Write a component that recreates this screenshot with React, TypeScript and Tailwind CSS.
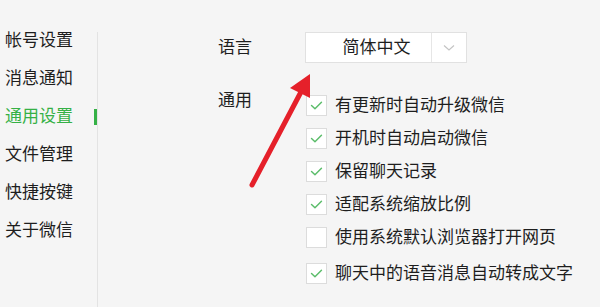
import React from 'react';

const menu = ['帐号设置', '消息通知', '通用设置', '文件管理', '快捷按键', '关于微信'];

const options = [
  { label: '有更新时自动升级微信', checked: true },
  { label: '开机时自动启动微信', checked: true },
  { label: '保留聊天记录', checked: true },
  { label: '适配系统缩放比例', checked: true },
  { label: '使用系统默认浏览器打开网页', checked: false },
  { label: '聊天中的语音消息自动转成文字', checked: true, gap: true },
];

const Check = () => (
  <svg width="21" height="21" viewBox="0 0 21 21" fill="none">
    <path d="M5 10.5l3.8 3.6L16 7" stroke="#5bbd6a" strokeWidth="1.6" strokeLinecap="round" strokeLinejoin="round" />
  </svg>
);

export default function App() {
  return (
    <div className="relative w-[600px] h-[307px] overflow-hidden bg-[#f5f5f5] flex font-['Liberation_Sans','Noto_Sans_CJK_SC',sans-serif] text-[17px] text-[#1e1e1e]">
      <div className="w-[97px] pt-[22px] flex flex-col">
        {menu.map((m) => (
          <div key={m} className="h-[38px] flex items-center justify-between pl-[5px]">
            <span className={m === '通用设置' ? 'text-[#35b146]' : ''}>{m}</span>
            {m === '通用设置' && <span className="w-[3px] h-[16px] bg-[#35b146]" />}
          </div>
        ))}
      </div>
      <div className="w-px mt-[32px] bg-[#e3e3e3]" />

      <div className="flex-1 pl-[120px] pt-[32px]">
        <div className="flex items-center">
          <div className="w-[87px]">语言</div>
          <div className="w-[162px] h-[31px] bg-white border border-[#e1e1e1] flex items-center">
            <div className="flex-1 pl-4 text-center">简体中文</div>
            <div className="w-px h-full bg-[#e6e6e6]" />
            <div className="w-[34px] flex justify-center">
              <svg width="12" height="8" viewBox="0 0 12 8" fill="none">
                <path d="M1 1.5l5 4.5 5-4.5" stroke="#c4c4c4" strokeWidth="1.2" />
              </svg>
            </div>
          </div>
        </div>

        <div className="flex mt-[26px]">
          <div className="w-[88px] leading-[24px]">通用</div>
          <div className="flex flex-col">
            {options.map((o) => (
              <div key={o.label} className={`h-[33px] flex items-center ${o.gap ? 'mt-[3px]' : ''}`}>
                <div className="w-[21px] h-[21px] bg-white border border-[#dcdcdc] flex items-center justify-center">
                  {o.checked && <Check />}
                </div>
                <span className="ml-[8px] whitespace-nowrap">{o.label}</span>
              </div>
            ))}
          </div>
        </div>
      </div>

      <svg className="absolute left-0 top-0 pointer-events-none" width="600" height="307" viewBox="0 0 600 307">
        <line x1="252" y1="185" x2="302" y2="90" stroke="#e5202a" strokeWidth="5" strokeLinecap="round" />
        <polygon points="310,74 310,98 290,88" fill="#e5202a" />
      </svg>
    </div>
  );
}
